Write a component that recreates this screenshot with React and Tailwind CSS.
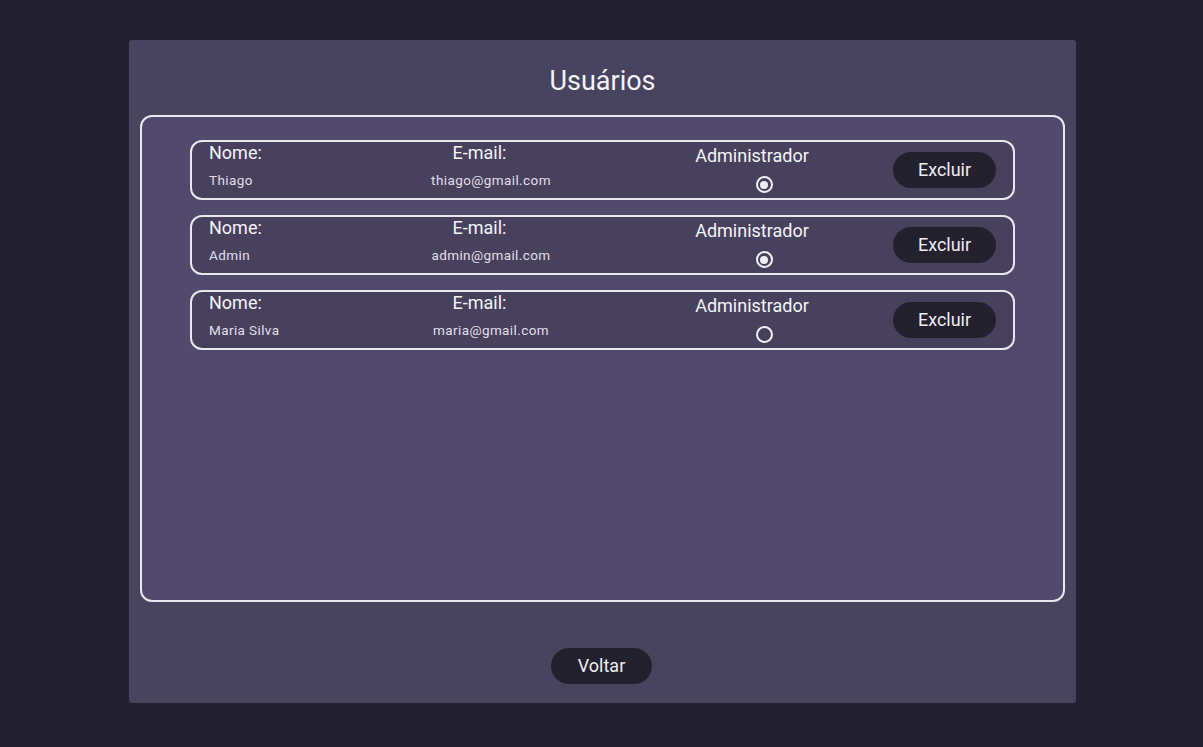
import React from 'react';

const users = [
  { id: 1, name: 'Thiago', email: 'thiago@gmail.com', admin: true },
  { id: 2, name: 'Admin', email: 'admin@gmail.com', admin: true },
  { id: 3, name: 'Maria Silva', email: 'maria@gmail.com', admin: false },
];

const Radio = ({ checked }) => (
  <div className="w-[17px] h-[17px] rounded-full border-2 border-[#f1eff5] flex items-center justify-center">
    {checked && <div className="w-2 h-2 rounded-full bg-[#f1eff5]"></div>}
  </div>
);

const UserRow = ({ user }) => (
  <div className="flex items-start h-[60px] border-2 border-[#e9e7ef] rounded-[12px] bg-[#47415e] pl-[17px] pr-[17px]">
    <div className="w-[202px] flex flex-col">
      <span className="text-lg leading-[22px] text-[#f4f3f7]">Nome:</span>
      <span className="text-[13.5px] leading-5 mt-[6px] text-[#e2dfea] tracking-[0.4px]">{user.name}</span>
    </div>
    <div className="w-[160px] flex flex-col items-center">
      <span className="text-lg leading-[22px] text-[#f4f3f7] mr-[23px]">E-mail:</span>
      <span className="text-[13.5px] leading-5 mt-[6px] text-[#e2dfea] tracking-[0.4px]">{user.email}</span>
    </div>
    <div className="w-[160px] ml-[107px] flex flex-col items-center pt-[3px]">
      <span className="text-lg leading-[22px] text-[#f4f3f7] mr-[12px]">Administrador</span>
      <div className="mt-[9px] ml-[12px]">
        <Radio checked={user.admin} />
      </div>
    </div>
    <div className="flex-1 flex justify-end self-center">
      <button className="h-9 w-[103px] rounded-full bg-[#24212f] text-lg text-[#eeedf2]">Excluir</button>
    </div>
  </div>
);

export default function App() {
  return (
    <div className="min-h-screen bg-[#23212f] pt-[40px]" style={{ fontFamily: 'Roboto, "Noto Sans", sans-serif' }}>
      <div className="w-[947px] h-[663px] ml-[129px] bg-[#48435f] rounded-[3px] flex flex-col px-[11px] pt-[25px] pb-[19px]">
        <h1 className="text-[27px] leading-8 text-center text-[#f4f3f7]">Usuários</h1>
        <div className="mt-[18px] h-[487px] border-2 border-[#e9e7ef] rounded-[12px] bg-[#514a6d] px-[48px] pt-[23px] flex flex-col gap-[15px]">
          {users.map((u) => (
            <UserRow key={u.id} user={u} />
          ))}
        </div>
        <div className="flex-1 flex items-end justify-center">
          <button className="h-9 w-[101px] rounded-full bg-[#24212f] text-lg text-[#eeedf2] ml-[-2px]">Voltar</button>
        </div>
      </div>
    </div>
  );
}
